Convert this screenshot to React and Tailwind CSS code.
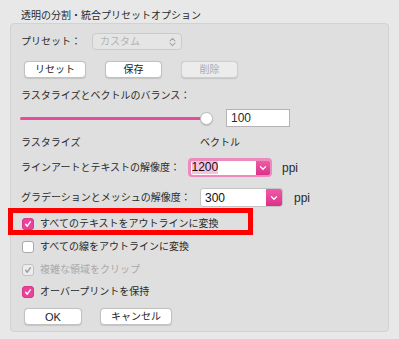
import React from "react";

const Check = ({ color = "#fff" }) => (
  <svg width="12" height="12" viewBox="0 0 12 12">
    <path d="M3.2 6.4 L5.1 8.6 L8.8 3.4" fill="none" stroke={color} strokeWidth="1.7" strokeLinecap="round" strokeLinejoin="round" />
  </svg>
);

const Checkbox = ({ state, label }) => {
  let box = "bg-white border border-[#a9a9a9]";
  if (state === "on") box = "bg-[#e8429b] border border-[#d8358b]";
  if (state === "disabled") box = "bg-[#ececec] border border-[#c2c2c2]";
  return (
    <div className="flex items-center h-[14px] pl-[11px]">
      <div className={`w-[12px] h-[12px] rounded-[3px] flex items-center justify-center ${box}`}>
        {state === "on" && <Check />}
        {state === "disabled" && <Check color="#9a9a9a" />}
      </div>
      <span className={`ml-[6px] ${state === "disabled" ? "text-[#a9a9a9]" : "text-[#2a2a2a]"}`}>{label}</span>
    </div>
  );
};

const Chevron = () => (
  <svg width="8" height="6" viewBox="0 0 8 6">
    <path d="M1.5 1.8 L4 4.2 L6.5 1.8" fill="none" stroke="#fff" strokeWidth="1.3" strokeLinecap="round" strokeLinejoin="round" />
  </svg>
);

const Button = ({ children, w, disabled }) => (
  <div
    className={`h-[17px] rounded-[4px] border flex items-center justify-center shadow-[0_0.5px_1px_rgba(0,0,0,0.12)] ${w} ${
      disabled ? "bg-[#ececec] border-[#cfcfcf] text-[#ababab]" : "bg-white border-[#c1c1c1] text-[#222]"
    }`}
  >
    {children}
  </div>
);

export default function App() {
  return (
    <div className="relative w-[399px] h-[339px] bg-[#e8e8e8] overflow-hidden font-['Liberation_Sans','Noto_Sans_CJK_JP',sans-serif] text-[10px] leading-[14px] text-[#2a2a2a]">
      <div className="pl-[21px] pt-[9px] h-[23px]">透明の分割・統合プリセットオプション</div>

      <div className="mx-[10px] h-[309px] rounded-[4px] border border-[#d2d2d2] bg-[#dfdfdf]">
        {/* preset */}
        <div className="mt-[9px] h-[17px] flex items-center pl-[10px]">
          <span className="w-[71px]">プリセット：</span>
          <div className="w-[90px] h-[17px] rounded-[4px] border border-[#cbcbcb] bg-[#e5e5e5] flex items-center justify-between pl-[7px] pr-[5px] text-[#b3b3b3]">
            <span>カスタム</span>
            <svg width="7" height="10" viewBox="0 0 7 10">
              <path d="M1 3.8 L3.5 1.3 L6 3.8 M1 6.2 L3.5 8.7 L6 6.2" fill="none" stroke="#a5a5a5" strokeWidth="1.1" strokeLinecap="round" strokeLinejoin="round" />
            </svg>
          </div>
        </div>

        {/* buttons */}
        <div className="mt-[11px] flex items-center pl-[13px] gap-[19px]">
          <Button w="w-[62px]">リセット</Button>
          <Button w="w-[57px]">保存</Button>
          <Button w="w-[57px]" disabled>削除</Button>
        </div>

        <div className="mt-[11px] pl-[10px] h-[14px]">ラスタライズとベクトルのバランス：</div>

        {/* slider */}
        <div className="mt-[6px] h-[18px] flex items-center pl-[9px]">
          <div className="relative w-[198px] h-[18px] flex items-center">
            <div className="w-[186px] h-[3px] bg-[#e84b9e] rounded-full" />
            <div className="absolute left-[180px] top-[3px] w-[13px] h-[13px] rounded-full bg-white border border-[#b9b9b9] shadow-[0_1px_1px_rgba(0,0,0,0.15)]" />
          </div>
          <div className="ml-[8px] w-[64px] h-[18px] bg-white border border-[#b4b4b4] flex items-center pl-[4px] text-[12px]">100</div>
        </div>

        <div className="mt-[9px] h-[14px] flex items-center pl-[10px]">
          <span className="w-[179px]">ラスタライズ</span>
          <span>ベクトル</span>
        </div>

        {/* line art */}
        <div className="mt-[8px] h-[19px] flex items-center pl-[10px]">
          <span className="w-[167px]">ラインアートとテキストの解像度：</span>
          <div className="w-[84px] h-[19px] rounded-[4px] bg-[#ea8cbd] p-[2.5px] flex">
            <div className="flex-1 bg-white flex items-center pl-[1px] rounded-l-[2px]">
              <span className="bg-[#f6c3de] text-[12px] leading-[13px] text-[#111]">1200</span>
            </div>
            <div className="w-[14px] bg-gradient-to-b from-[#f05aa8] to-[#dc2f8a] flex items-center justify-center rounded-r-[2px]">
              <Chevron />
            </div>
          </div>
          <span className="ml-[10px] text-[12px]">ppi</span>
        </div>

        {/* gradient */}
        <div className="mt-[11px] h-[19px] flex items-center pl-[10px]">
          <span className="w-[179px]">グラデーションとメッシュの解像度：</span>
          <div className="w-[83px] h-[19px] rounded-[3px] border border-[#c4c4c4] bg-white flex overflow-hidden">
            <div className="flex-1 flex items-center pl-[4px] text-[12px] text-[#111]">300</div>
            <div className="w-[16px] bg-gradient-to-b from-[#f05aa8] to-[#dc2f8a] flex items-center justify-center">
              <Chevron />
            </div>
          </div>
          <span className="ml-[11px] text-[12px]">ppi</span>
        </div>

        <div className="mt-[10px] relative">
          <Checkbox state="on" label="すべてのテキストをアウトラインに変換" />
          <div className="absolute left-[-3px] top-[-9px] w-[245px] h-[27px] border-[5px] border-[#fe0000]" />
        </div>
        <div className="mt-[9px]">
          <Checkbox state="off" label="すべての線をアウトラインに変換" />
        </div>
        <div className="mt-[9px]">
          <Checkbox state="disabled" label="複雑な領域をクリップ" />
        </div>
        <div className="mt-[8px]">
          <Checkbox state="on" label="オーバープリントを保持" />
        </div>

        <div className="mt-[9px] flex items-center pl-[13px] gap-[18px]">
          <Button w="w-[58px]"><span className="text-[11px]">OK</span></Button>
          <Button w="w-[72px]">キャンセル</Button>
        </div>
      </div>
    </div>
  );
}
